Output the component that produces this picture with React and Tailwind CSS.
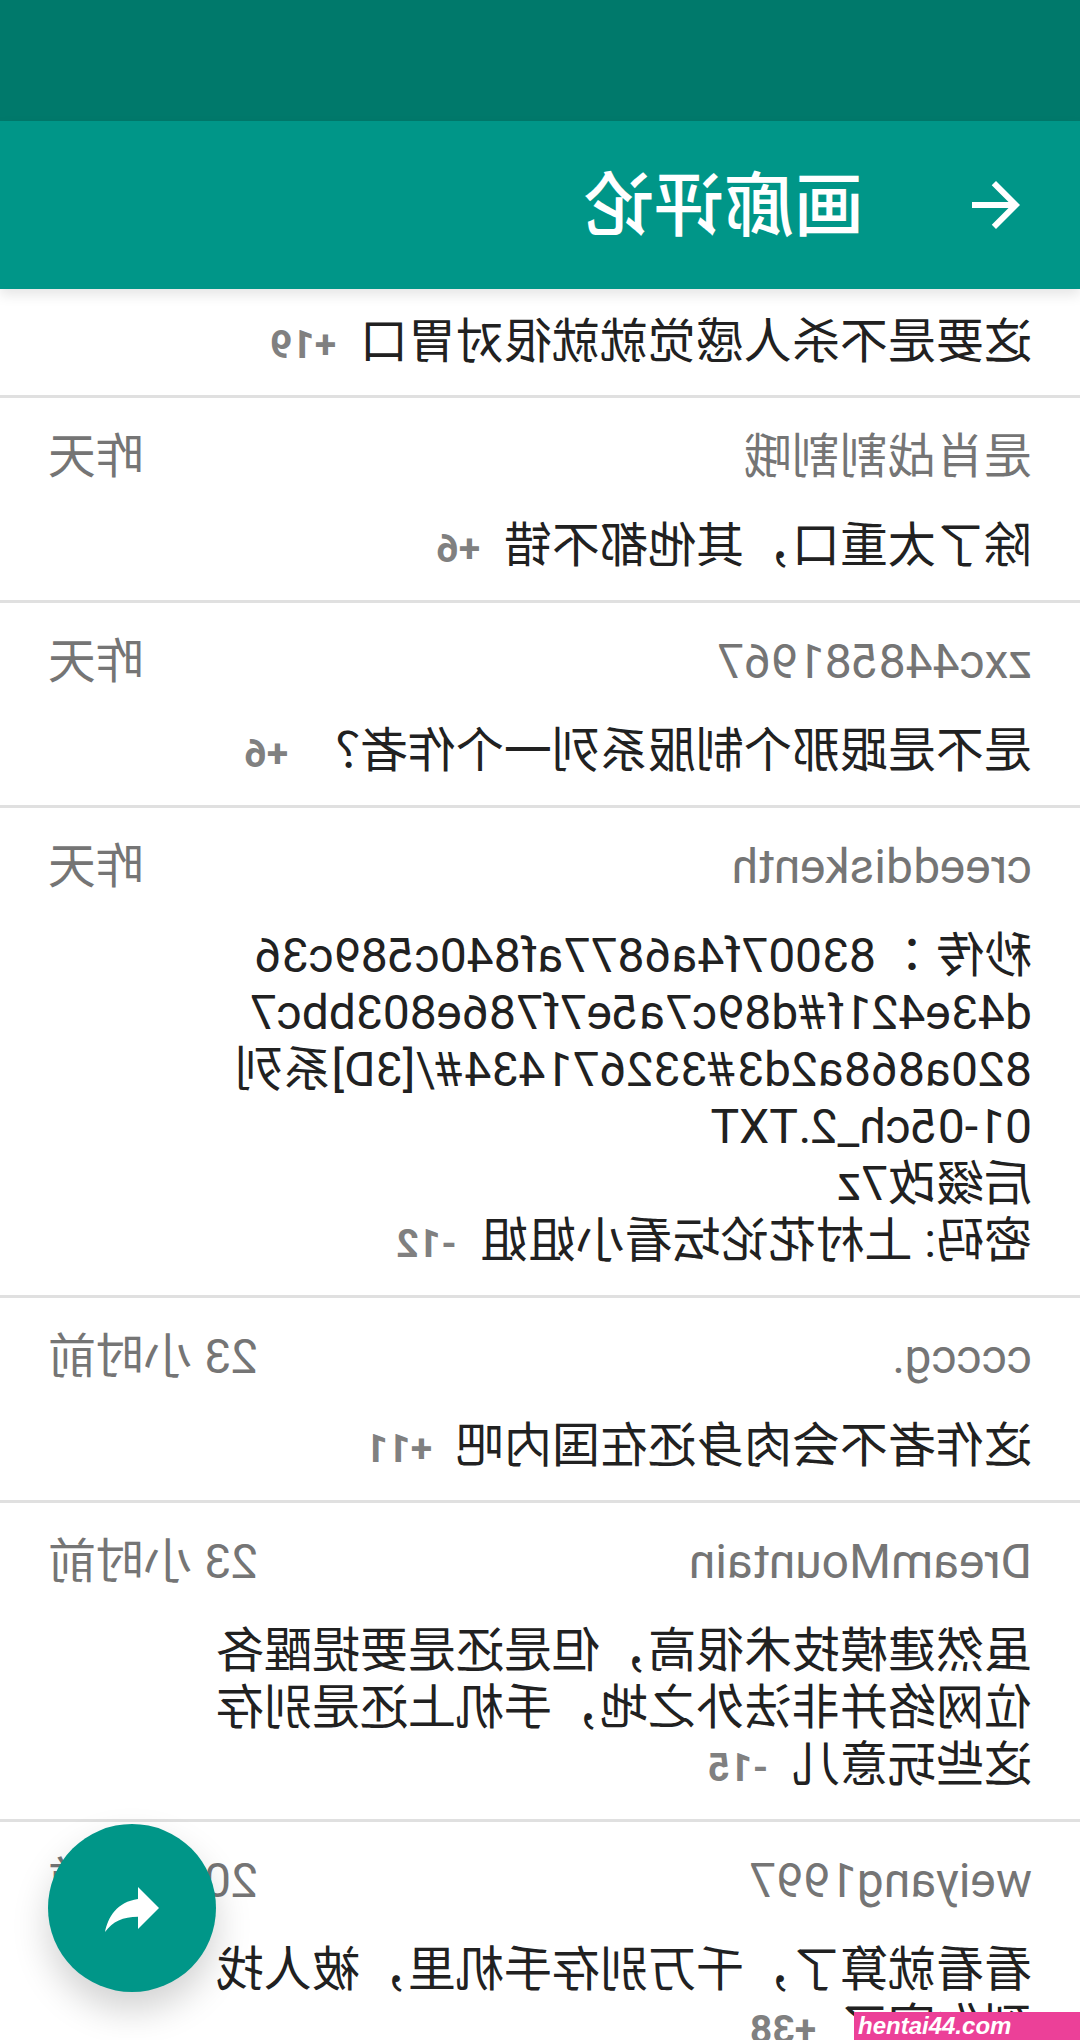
const font = "font-['Roboto','Noto_Sans_CJK_SC',sans-serif]";

const comments = [
  { lines: ["这要是不杀人感觉就就很对胃口"], score: "+19", first: true },
  { user: "是肖战割割哦", time: "昨天", lines: ["除了太重口，其他都不错"], score: "+6" },
  { user: "zxc448581967", time: "昨天", lines: ["是不是跟那个制服系列一个作者？"], score: "+6" },
  {
    user: "creeddiskenth",
    time: "昨天",
    lines: [
      <>
        秒传<span className="leading-none font-['Noto_Sans_CJK_TC',sans-serif]">：</span> 83007f4a6877af840c589c36
      </>,
      "d43e421f#d89c7a5e7f786e803bbc7",
      "820a868a2d3#332671434#/[3D]系列",
      "01-05ch_2.TXT",
      "后缀改7z",
      "密码: 上村花论坛看小姐姐",
    ],
    score: "-12",
  },
  { user: "ccccg.", time: "23 小时前", lines: ["这作者不会肉身还在国内吧"], score: "+11" },
  {
    user: "DreamMountain",
    time: "23 小时前",
    lines: ["虽然建模技术很高，但是还是要提醒各", "位网络并非法外之地，手机上还是别存", "这些玩意儿"],
    score: "-15",
  },
  {
    user: "weiyang1997",
    time: "20 小时前",
    lines: ["看看就算了，千万别存手机里，被人找", "到你家了"],
    score: "+38",
  },
];

function Comment({ c }) {
  return (
    <div className={`border-b-[3px] border-[#e0e0e0] px-12 ${c.first ? "pt-[24px] pb-[25px]" : "pt-[30px] pb-[26px]"}`}>
      {!c.first && (
        <div className="flex justify-between mb-[32px] text-[48px] leading-[57px] text-[#757575]">
          <span>{c.user}</span>
          <span>{c.time}</span>
        </div>
      )}
      <div className="text-[48px] leading-[57px] text-[#212121]">
        {c.lines.map((line, i) => (
          <div key={i} className="whitespace-nowrap">
            {line}
            {i === c.lines.length - 1 && (
              <span className="ml-[24px] text-[39px] leading-none font-bold text-[#808080]">{c.score}</span>
            )}
          </div>
        ))}
      </div>
    </div>
  );
}

export default function App() {
  return (
    <div className={`relative w-[1080px] h-[2040px] overflow-hidden bg-white ${font}`}>
      <div className="relative h-full -scale-x-100">
        <div className="flex flex-col h-full">
          <div className="h-[121px] bg-[#00796b]" />
          <div className="relative z-10 h-[168px] flex items-center gap-[96px] pl-12 bg-[#009688] shadow-[0_6px_12px_rgba(0,0,0,0.1)]">
            <svg viewBox="0 0 24 24" className="w-[72px] h-[72px] fill-white">
              <path d="M20 11H7.83l5.59-5.59L12 4l-8 8 8 8 1.41-1.41L7.83 13H20v-2z" />
            </svg>
            <span className="text-[70px] pt-1 text-white font-medium">画廊评论</span>
          </div>
          <div className="flex-1 overflow-hidden">
            {comments.map((c, i) => (
              <Comment key={i} c={c} />
            ))}
          </div>
        </div>
        <div className="absolute right-12 bottom-12 w-[168px] h-[168px] rounded-full bg-[#009688] flex items-center justify-center shadow-[0_18px_36px_rgba(0,0,0,0.18)]">
          <svg viewBox="0 0 24 24" className="w-[72px] h-[72px] fill-white">
            <path d="M10 9V5l-7 7 7 7v-4.1c5 0 8.5 1.6 11 5.1-1-5-4-10-11-11z" />
          </svg>
        </div>
      </div>
      <div className="absolute right-0 bottom-0 w-[226px] h-[28px] bg-[#ec4098] pl-1 text-[24px] leading-[28px] italic font-bold text-white font-['Liberation_Sans',sans-serif]">
        hentai44.com
      </div>
    </div>
  );
}
